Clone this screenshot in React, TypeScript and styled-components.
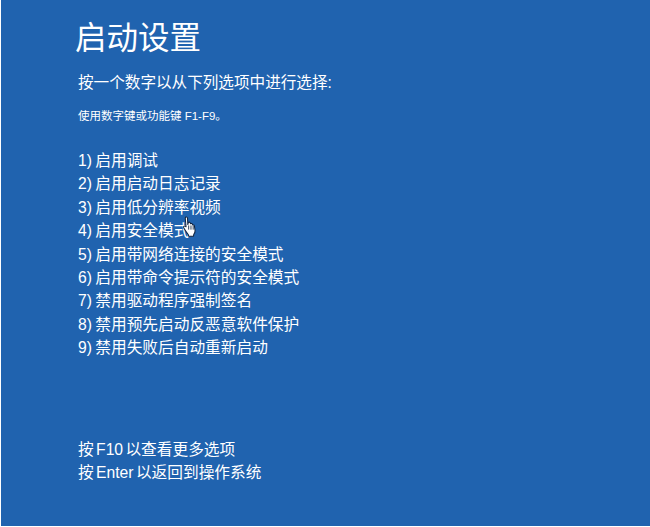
import styled, { createGlobalStyle } from 'styled-components';

const GlobalStyle = createGlobalStyle`
	html, body {
		margin: 0;
		padding: 0;
		background: #fff;
	}
`;

const Screen = styled.div`
	position: relative;
	display: flex;
	flex-direction: column;
	box-sizing: border-box;
	width: 649px;
	height: 526px;
	margin-left: 1px;
	padding: 18px 0 0 77px;
	background: #2063af;
	color: #fff;
	font-family: "Liberation Sans", "Noto Sans CJK SC", sans-serif;
`;

const Title = styled.h1`
	margin: 0 0 0 -3px;
	font-size: 31.5px;
	font-weight: 400;
	line-height: 40px;
`;

const Prompt = styled.p`
	margin: 13px 0 0;
	font-size: 15.6px;
	line-height: 24px;
`;

const Hint = styled.p`
	margin: 13px 0 0;
	font-size: 11.5px;
	line-height: 16px;
`;

const OptionList = styled.ol`
	display: flex;
	flex-direction: column;
	margin: 25px 0 0;
	padding: 0;
	list-style: none;
`;

const Option = styled.li`
	font-size: 15.7px;
	line-height: 23.4px;
	word-spacing: -1px;
`;

const Footer = styled.div`
	display: flex;
	flex-direction: column;
	margin-top: 78px;
`;

const FooterLine = styled.div`
	font-size: 15.7px;
	line-height: 23.4px;
	word-spacing: -2px;
`;

const Pointer = styled.svg`
	position: absolute;
	left: 181px;
	top: 216px;
	width: 15px;
	height: 21px;
`;

const options = [
	'1) 启用调试',
	'2) 启用启动日志记录',
	'3) 启用低分辨率视频',
	'4) 启用安全模式',
	'5) 启用带网络连接的安全模式',
	'6) 启用带命令提示符的安全模式',
	'7) 禁用驱动程序强制签名',
	'8) 禁用预先启动反恶意软件保护',
	'9) 禁用失败后自动重新启动',
];

const App = () => {
	return (
		<>
			<GlobalStyle />
			<Screen>
				<Title>启动设置</Title>
				<Prompt>按一个数字以从下列选项中进行选择:</Prompt>
				<Hint>使用数字键或功能键 F1-F9。</Hint>
				<OptionList>
					{options.map((option) => (
						<Option key={option}>{option}</Option>
					))}
				</OptionList>
				<Footer>
					<FooterLine>按 F10 以查看更多选项</FooterLine>
					<FooterLine>按 Enter 以返回到操作系统</FooterLine>
				</Footer>
				<Pointer viewBox="0 0 14 20">
					<path
						d="M3.2 1.2c.8-.6 1.8-.1 1.9.9l.3 6 .5-2c.9-.5 1.7-.2 1.9.6l.2.7c.8-.5 1.6-.2 1.8.6l.1.6c.9-.3 1.6.1 1.8 1l.6 4.2c.1 1.4-.4 2.6-1.2 3.6l-.3 1.8H6.200l-.4-1.600C4.300 15.900 2.800 13.500 1.600 11.400c-.5-1-.2-1.700.5-1.900.6-.1 1.200.2 1.600.8L3 2.500c0-.5 0-1 .2-1.300Z"
						fill="#fff"
						stroke="#10233f"
						strokeWidth="1"
						strokeLinejoin="round"
					/>
					<path d="M6.200 9v4M8.400 9v4M10.500 9.500v3.500" stroke="#10233f" strokeWidth="0.8" fill="none" />
				</Pointer>
			</Screen>
		</>
	);
};

export default App;
